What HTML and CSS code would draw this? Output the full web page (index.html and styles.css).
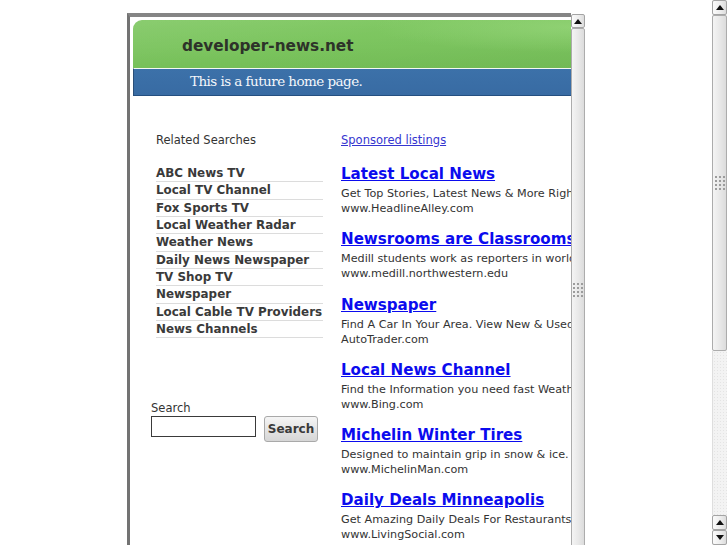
FILE: index.html
```html
<!DOCTYPE html>
<html>
<head>
<meta charset="utf-8">
<title>developer-news.net</title>
<link rel="stylesheet" href="styles.css">
</head>
<body>
<div class="page">
  <div class="frame">
    <div class="view">
      <div class="header">
        <div class="hgreen"><span class="domain">developer-news.net</span></div>
        <div class="hblue"><span class="tagline">This is a future home page.</span></div>
      </div>
      <div class="columns">
        <div class="left">
          <div class="rs-title">Related Searches</div>
          <ul class="rs-list">
            <li>ABC News TV</li>
            <li>Local TV Channel</li>
            <li>Fox Sports TV</li>
            <li>Local Weather Radar</li>
            <li>Weather News</li>
            <li>Daily News Newspaper</li>
            <li>TV Shop TV</li>
            <li>Newspaper</li>
            <li>Local Cable TV Providers</li>
            <li>News Channels</li>
          </ul>
          <form class="search">
            <label class="search-label">Search</label>
            <div class="search-row">
              <input class="search-input" type="text">
              <button class="search-btn" type="button">Search</button>
            </div>
          </form>
        </div>
        <div class="right">
          <a class="sponsored" href="#">Sponsored listings</a>
          <div class="ads">
            <div class="ad">
              <a class="ad-title" href="#">Latest Local News</a>
              <div class="ad-desc">Get Top Stories, Latest News &amp; More Right Here</div>
              <div class="ad-url">www.HeadlineAlley.com</div>
            </div>
            <div class="ad">
              <a class="ad-title" href="#">Newsrooms are Classrooms</a>
              <div class="ad-desc">Medill students work as reporters in world class newsrooms</div>
              <div class="ad-url">www.medill.northwestern.edu</div>
            </div>
            <div class="ad">
              <a class="ad-title" href="#">Newspaper</a>
              <div class="ad-desc">Find A Car In Your Area. View New &amp; Used Cars</div>
              <div class="ad-url">AutoTrader.com</div>
            </div>
            <div class="ad">
              <a class="ad-title" href="#">Local News Channel</a>
              <div class="ad-desc">Find the Information you need fast Weather</div>
              <div class="ad-url">www.Bing.com</div>
            </div>
            <div class="ad">
              <a class="ad-title" href="#">Michelin Winter Tires</a>
              <div class="ad-desc">Designed to maintain grip in snow &amp; ice.</div>
              <div class="ad-url">www.MichelinMan.com</div>
            </div>
            <div class="ad">
              <a class="ad-title" href="#">Daily Deals Minneapolis</a>
              <div class="ad-desc">Get Amazing Daily Deals For Restaurants</div>
              <div class="ad-url">www.LivingSocial.com</div>
            </div>
          </div>
        </div>
      </div>
    </div>
    <div class="sb sb-inner">
      <div class="sb-btn"><svg width="8" height="5" viewBox="0 0 8 5"><polygon points="0,5 8,5 4,0" fill="#111"/></svg></div>
      <div class="sb-thumb thumb-inner">
        <svg width="10" height="14" viewBox="0 0 10 14" class="grip"><g fill="#9c9c9c"><rect x="0" y="0" width="2" height="2"/><rect x="4" y="0" width="2" height="2"/><rect x="8" y="0" width="2" height="2"/><rect x="0" y="4" width="2" height="2"/><rect x="4" y="4" width="2" height="2"/><rect x="8" y="4" width="2" height="2"/><rect x="0" y="8" width="2" height="2"/><rect x="4" y="8" width="2" height="2"/><rect x="8" y="8" width="2" height="2"/><rect x="0" y="12" width="2" height="2"/><rect x="4" y="12" width="2" height="2"/><rect x="8" y="12" width="2" height="2"/></g></svg>
      </div>
    </div>
  </div>
</div>
<div class="sb sb-outer">
  <div class="sb-btn"><svg width="8" height="5" viewBox="0 0 8 5"><polygon points="0,5 8,5 4,0" fill="#111"/></svg></div>
  <div class="sb-thumb thumb-outer">
    <svg width="10" height="14" viewBox="0 0 10 14" class="grip"><g fill="#9c9c9c"><rect x="0" y="0" width="2" height="2"/><rect x="4" y="0" width="2" height="2"/><rect x="8" y="0" width="2" height="2"/><rect x="0" y="4" width="2" height="2"/><rect x="4" y="4" width="2" height="2"/><rect x="8" y="4" width="2" height="2"/><rect x="0" y="8" width="2" height="2"/><rect x="4" y="8" width="2" height="2"/><rect x="8" y="8" width="2" height="2"/><rect x="0" y="12" width="2" height="2"/><rect x="4" y="12" width="2" height="2"/><rect x="8" y="12" width="2" height="2"/></g></svg>
  </div>
  <div class="sb-trough"></div>
  <div class="sb-btn"><svg width="8" height="5" viewBox="0 0 8 5"><polygon points="0,5 8,5 4,0" fill="#111"/></svg></div>
  <div class="sb-btn"><svg width="8" height="5" viewBox="0 0 8 5"><polygon points="0,0 8,0 4,5" fill="#111"/></svg></div>
</div>
</body>
</html>
```
FILE: styles.css
```css
html, body {
  margin: 0;
  padding: 0;
}
body {
  display: flex;
  height: 545px;
  overflow: hidden;
  background: #fff;
  font-family: "DejaVu Sans", Verdana, sans-serif;
  color: #333;
}
.page {
  flex: 1;
  padding: 13px 0 0 127px;
  overflow: hidden;
}
.frame {
  display: flex;
  height: 540px;
}
.view {
  width: 444px;
  flex: none;
  box-sizing: border-box;
  border-left: 3px solid #737373;
  border-top: 4px solid #858585;
  padding: 3px 0 0 3px;
  overflow: hidden;
}
.header {
  width: 100%;
}
.hgreen {
  height: 48px;
  border-top-left-radius: 9px;
  box-sizing: border-box;
  padding: 3px 0 0 49px;
  line-height: 45px;
  background:
    radial-gradient(ellipse 60% 70% at 100% 15%, rgba(150, 214, 122, 0.7), rgba(150, 214, 122, 0) 75%),
    linear-gradient(170deg, rgba(255,255,255,0.08) 0%, rgba(255,255,255,0) 45%, rgba(0,0,0,0.03) 100%),
    linear-gradient(180deg, #80c863 0%, #7bc45e 55%, #75bf58 100%);
}
.domain {
  font-family: "DejaVu Sans", Verdana, sans-serif;
  font-weight: bold;
  font-size: 15.3px;
  color: #2d3329;
}
.hblue {
  height: 26px;
  border-top: 1px solid #f4f8f2;
  border-bottom: 1px solid #244f80;
  border-left: 1px solid #2b4f78;
  background: linear-gradient(180deg, #3c71a9 0%, #386ba3 100%);
  padding-left: 56px;
  line-height: 24px;
}
.tagline {
  font-family: "DejaVu Serif", "Liberation Serif", serif;
  font-size: 13.5px;
  letter-spacing: -0.55px;
  color: #f4f7fb;
}
.columns {
  display: flex;
  padding: 36px 0 0 18px;
}
.left {
  width: 172px;
  flex: none;
}
.rs-title {
  padding-left: 5px;
  line-height: 16px;
  font-size: 11.5px;
  color: #333;
}
.rs-list {
  list-style: none;
  margin: 17px 0 0 5px;
  padding: 0;
  width: 167px;
}
.rs-list li {
  font-weight: bold;
  font-size: 11.9px;
  line-height: 16.33px;
  border-bottom: 1px solid #dcdcdc;
  color: #3a3a3a;
  white-space: nowrap;
}
.search {
  margin: 63px 0 0 0;
}
.search-label {
  display: block;
  line-height: 15px;
  font-size: 11.5px;
  color: #333;
}
.search-row {
  display: flex;
  align-items: flex-start;
}
.search-input {
  width: 105px;
  height: 21px;
  box-sizing: border-box;
  border: 1px solid #3a3a3a;
  margin: 0;
  padding: 0 2px;
  background: #fff;
}
.search-btn {
  margin: 0 0 0 8px;
  width: 54px;
  height: 26px;
  box-sizing: border-box;
  border: 1px solid #a9a9a9;
  border-radius: 3px;
  background: linear-gradient(180deg, #f5f5f5 0%, #e2e2e2 60%, #d6d6d6 100%);
  font-family: "DejaVu Sans", Verdana, sans-serif;
  font-weight: bold;
  font-size: 12px;
  color: #3a3a3a;
  padding: 0;
}
.right {
  margin-left: 18px;
  white-space: nowrap;
  flex: none;
}
.sponsored {
  display: block;
  line-height: 16px;
  font-size: 11.5px;
  color: #3535d0;
  text-decoration: underline;
}
.ads {
  margin-top: 14px;
}
.ad {
  margin-bottom: 11.3px;
}
.ad-title {
  display: block;
  font-weight: bold;
  font-size: 15.1px;
  line-height: 24px;
  color: #0b0bee;
  text-decoration: underline;
}
.ad-desc, .ad-url {
  line-height: 15px;
  font-size: 11.2px;
  color: #333;
}
.sb {
  display: flex;
  flex-direction: column;
  flex: none;
  overflow: hidden;
}
.sb-inner {
  width: 14px;
  margin-top: 1px;
  height: 540px;
}
.sb-outer {
  width: 15px;
  height: 545px;
  background: #f0f0f0;
}
.sb-btn {
  flex: none;
  height: 14px;
  box-sizing: border-box;
  border: 1px solid #a4a4a4;
  border-radius: 2px;
  background: linear-gradient(90deg, #fbfbfb 0%, #ececec 60%, #dcdcdc 100%);
  display: flex;
  align-items: center;
  justify-content: center;
}
.sb-outer .sb-btn {
  height: 15px;
}
.sb-thumb {
  flex: none;
  box-sizing: border-box;
  border: 1px solid #acacac;
  border-radius: 2px;
  background: linear-gradient(90deg, #f4f4f4 0%, #e9e9e9 50%, #dcdcdc 100%);
  display: flex;
  align-items: center;
  justify-content: center;
}
.thumb-inner {
  height: 524px;
}
.thumb-outer {
  height: 336px;
}
.sb-trough {
  flex: 1;
  background-color: #f3f3f3;
  background-image: radial-gradient(circle, #e4e4e4 0.6px, transparent 0.8px);
  background-size: 3px 3px;
  border-left: 1px solid #dedede;
}
```
